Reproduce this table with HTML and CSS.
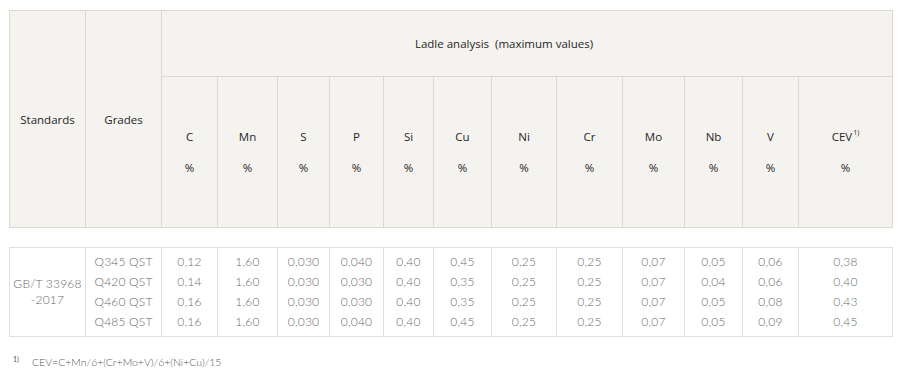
FILE: index.html
```html
<!DOCTYPE html>
<html>
<head>
<meta charset="utf-8">
<link rel="stylesheet" href="styles.css">
</head>
<body>
<div class="page">
  <table class="tbl head">
    <colgroup>
      <col class="w76"><col class="w76"><col class="w56"><col class="w60"><col class="w52"><col class="w54"><col class="w50"><col class="w58"><col class="w65"><col class="w66"><col class="w62"><col class="w58"><col class="w56"><col class="w94">
    </colgroup>
    <tr class="r1">
      <th rowspan="2">Standards</th>
      <th rowspan="2">Grades</th>
      <th colspan="12" class="ladle">Ladle analysis&nbsp;&nbsp;(maximum values)</th>
    </tr>
    <tr class="r2">
      <th><div>C</div><div>%</div></th>
      <th><div>Mn</div><div>%</div></th>
      <th><div>S</div><div>%</div></th>
      <th><div>P</div><div>%</div></th>
      <th><div>Si</div><div>%</div></th>
      <th><div>Cu</div><div>%</div></th>
      <th><div>Ni</div><div>%</div></th>
      <th><div>Cr</div><div>%</div></th>
      <th><div>Mo</div><div>%</div></th>
      <th><div>Nb</div><div>%</div></th>
      <th><div>V</div><div>%</div></th>
      <th><div>CEV<sup>1)</sup></div><div>%</div></th>
    </tr>
  </table>

  <table class="tbl body">
    <colgroup>
      <col class="w76"><col class="w76"><col class="w56"><col class="w60"><col class="w52"><col class="w54"><col class="w50"><col class="w58"><col class="w65"><col class="w66"><col class="w62"><col class="w58"><col class="w56"><col class="w94">
    </colgroup>
    <tr>
      <td class="std">GB/T 33968<br>-2017</td>
      <td><div>Q345 QST</div><div>Q420 QST</div><div>Q460 QST</div><div>Q485 QST</div></td>
      <td><div>0,12</div><div>0,14</div><div>0,16</div><div>0,16</div></td>
      <td><div>1,60</div><div>1,60</div><div>1,60</div><div>1,60</div></td>
      <td><div>0,030</div><div>0,030</div><div>0,030</div><div>0,030</div></td>
      <td><div>0,040</div><div>0,030</div><div>0,030</div><div>0,040</div></td>
      <td><div>0,40</div><div>0,40</div><div>0,40</div><div>0,40</div></td>
      <td><div>0,45</div><div>0,35</div><div>0,35</div><div>0,45</div></td>
      <td><div>0,25</div><div>0,25</div><div>0,25</div><div>0,25</div></td>
      <td><div>0,25</div><div>0,25</div><div>0,25</div><div>0,25</div></td>
      <td><div>0,07</div><div>0,07</div><div>0,07</div><div>0,07</div></td>
      <td><div>0,05</div><div>0,04</div><div>0,05</div><div>0,05</div></td>
      <td><div>0,06</div><div>0,06</div><div>0,08</div><div>0,09</div></td>
      <td><div>0,38</div><div>0,40</div><div>0,43</div><div>0,45</div></td>
    </tr>
  </table>

  <p class="note"><span class="mark">1)</span><span>CEV=C+Mn/6+(Cr+Mo+V)/6+(Ni+Cu)/15</span></p>
</div>
</body>
</html>
```

FILE: styles.css
```css
html, body {
  margin: 0;
  padding: 0;
  background: #ffffff;
}

.page {
  padding: 10px 8px 0 9px;
}

.tbl {
  border-collapse: collapse;
  table-layout: fixed;
  width: 883px;
}

.w76 { width: 76px; }
.w56 { width: 56px; }
.w60 { width: 60px; }
.w52 { width: 52px; }
.w54 { width: 54px; }
.w50 { width: 50px; }
.w58 { width: 58px; }
.w65 { width: 65px; }
.w66 { width: 66px; }
.w62 { width: 62px; }
.w94 { width: 94px; }

.head {
  background: #f5f3ef;
  font-family: "Open Sans", "Noto Sans", sans-serif;
  font-size: 11.5px;
  font-weight: 400;
  color: #262626;
}

.head th {
  border: 1px solid #dcd8d0;
  font-weight: 400;
  text-align: center;
  vertical-align: middle;
  padding: 0;
}

.head .r1 { height: 66px; }
.head .r2 { height: 151px; }

.head .ladle {
  padding-right: 46px;
}

.head .r2 th div {
  line-height: 16px;
}

.head .r2 th div + div {
  margin-top: 15px;
}

.head sup {
  font-size: 7px;
  vertical-align: top;
  position: relative;
  top: -4px;
  margin-left: 1px;
}

.body {
  margin-top: 19px;
  font-family: "Lato", "Open Sans", sans-serif;
  font-weight: 300;
  font-size: 12px;
  color: #6a6a6a;
  letter-spacing: 0.2px;
}

.body td {
  border: 1px solid #e2dfd8;
  text-align: center;
  vertical-align: middle;
  padding: 4px 0;
}

.body td div {
  line-height: 20px;
  height: 20px;
}

.body td.std {
  line-height: 16px;
}

.note {
  margin: 17px 0 0 4px;
  font-family: "Lato", "Open Sans", sans-serif;
  font-weight: 300;
  font-size: 10.5px;
  color: #555;
  display: flex;
  align-items: flex-start;
  line-height: 16px;
}

.note .mark {
  font-size: 7px;
  line-height: 10px;
  width: 19px;
  font-weight: 400;
}
```
